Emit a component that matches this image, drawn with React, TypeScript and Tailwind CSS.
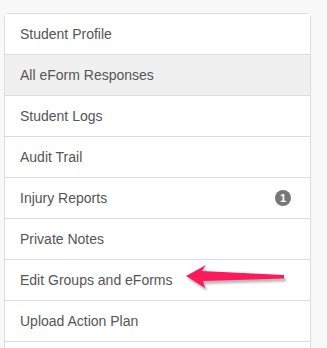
import React from "react"

const items = [
  { label: "Student Profile" },
  { label: "All eForm Responses", active: true },
  { label: "Student Logs" },
  { label: "Audit Trail" },
  { label: "Injury Reports", badge: 1 },
  { label: "Private Notes" },
  { label: "Edit Groups and eForms" },
  { label: "Upload Action Plan" },
  { label: "" },
]

export default function App() {
  return (
    <div className="relative h-[348px] w-[327px] overflow-hidden bg-[#f8f8f8] pl-[4px] pt-[13px] font-[family-name:'Liberation_Sans',Arial,sans-serif]">
      {/* Side nav list */}
      <div className="w-[307px] rounded-t-[4px] border border-[#dddddd] bg-white">
        {items.map((item, i) => (
          <a
            key={i}
            href="#"
            className={`flex h-[41px] items-center justify-between px-[15px] text-[14px] leading-[20px] text-[#555555] ${
              i < items.length - 1 ? "border-b border-[#dddddd]" : ""
            } ${item.active ? "bg-[#f0f0f0]" : "bg-white"}`}
          >
            <span>{item.label}</span>
            {item.badge ? (
              <span className="mr-[4px] flex h-[16px] w-[16px] items-center justify-center rounded-full bg-[#777777] text-[11px] font-bold leading-none text-white">
                {item.badge}
              </span>
            ) : null}
          </a>
        ))}
      </div>

      {/* Annotation arrow */}
      <svg
        className="pointer-events-none absolute left-[180px] top-[258px]"
        width="110"
        height="36"
        viewBox="0 0 110 36"
      >
        <defs>
          <filter id="soft" x="-10%" y="-30%" width="120%" height="160%">
            <feGaussianBlur stdDeviation="1.2" />
          </filter>
        </defs>
        <polygon
          points="8,21 28,10 24,16 106,20 106,23.5 25,26 27,33"
          fill="#8a8a8a"
          opacity="0.6"
          filter="url(#soft)"
        />
        <polygon
          points="6,18 26,7 22,13 104,17 104,20.5 23,23 25,30"
          fill="#fd1a5b"
        />
      </svg>
    </div>
  )
}
